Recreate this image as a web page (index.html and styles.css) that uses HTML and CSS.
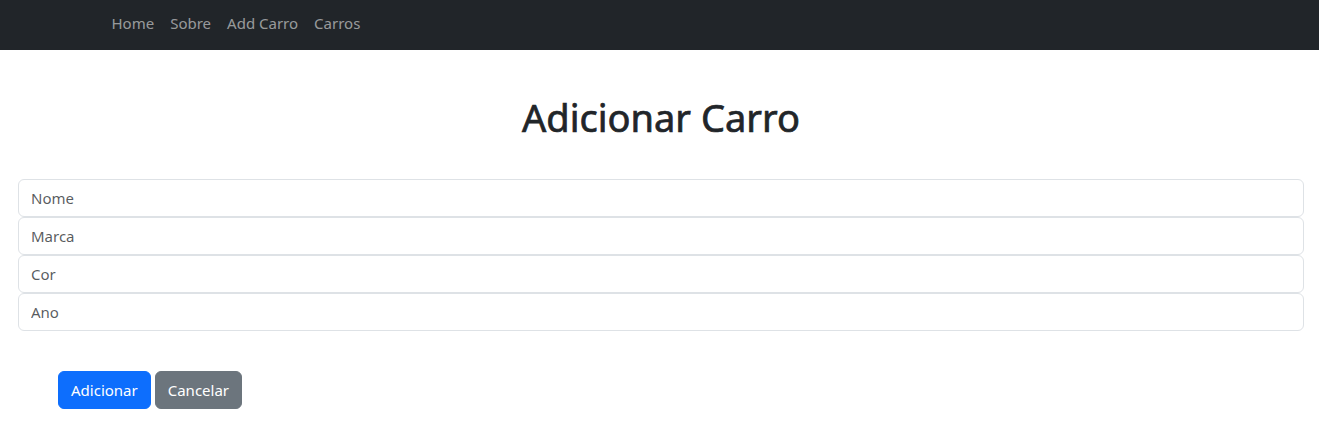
FILE: index.html
```html
<!DOCTYPE html>
<html lang="pt">
<head>
<meta charset="utf-8">
<title>Adicionar Carro</title>
<link rel="stylesheet" href="styles.css">
</head>
<body>
<nav class="navbar">
  <div class="nav-container">
    <ul class="nav-list">
      <li><a class="nav-link" href="#">Home</a></li>
      <li><a class="nav-link" href="#">Sobre</a></li>
      <li><a class="nav-link" href="#">Add Carro</a></li>
      <li><a class="nav-link" href="#">Carros</a></li>
    </ul>
  </div>
</nav>
<main class="page">
  <h1 class="title">Adicionar Carro</h1>
  <form class="car-form">
    <div class="fields">
      <input class="form-control" type="text" placeholder="Nome">
      <input class="form-control" type="text" placeholder="Marca">
      <input class="form-control" type="text" placeholder="Cor">
      <input class="form-control" type="text" placeholder="Ano">
    </div>
    <div class="actions">
      <button type="button" class="btn btn-primary">Adicionar</button>
      <button type="button" class="btn btn-secondary">Cancelar</button>
    </div>
  </form>
</main>
</body>
</html>
```

FILE: styles.css
```css
* { box-sizing: border-box; }
html, body { margin: 0; padding: 0; }
body {
  font-family: "Noto Sans", "Open Sans", sans-serif;
  font-size: 16px;
  line-height: 1.5;
  color: #212529;
  background: #fff;
}
.navbar {
  background: #212529;
  height: 50px;
  display: flex;
  align-items: center;
  padding-bottom: 4px;
}
.nav-container {
  width: 1140px;
  margin: 0 auto;
  padding: 0 14px;
}
.nav-list {
  list-style: none;
  margin: 0;
  padding: 0;
  display: flex;
}
.nav-link {
  display: block;
  padding: 8px 8px;
  color: rgba(255,255,255,0.55);
  text-decoration: none;
  font-size: 15px;
}
.page {
  padding: 0 15px 0 18px;
}
.title {
  margin: 43px 0 0;
  height: 48px;
  text-align: center;
  font-size: 38px;
  font-weight: 400;
  line-height: 48px;
  -webkit-text-stroke: 0.7px #212529;
}
.car-form { margin-top: 38px; }
.fields { display: flex; flex-direction: column; }
.form-control {
  display: block;
  width: 100%;
  height: 38px;
  padding: 6px 12px;
  font: inherit;
  font-size: 15px;
  color: #212529;
  background: #fff;
  border: 1px solid #dee2e6;
  border-radius: 6px;
}
.form-control::placeholder { color: rgba(33,37,41,0.75); }
.actions {
  margin-top: 40px;
  padding-left: 40px;
  display: flex;
  gap: 4px;
}
.btn {
  height: 38px;
  padding: 6px 12px;
  font: inherit;
  font-size: 15px;
  border: 1px solid transparent;
  border-radius: 6px;
  color: #fff;
  cursor: pointer;
}
.btn-primary { background: #0d6efd; border-color: #0d6efd; }
.btn-secondary { background: #6c757d; border-color: #6c757d; }
```
